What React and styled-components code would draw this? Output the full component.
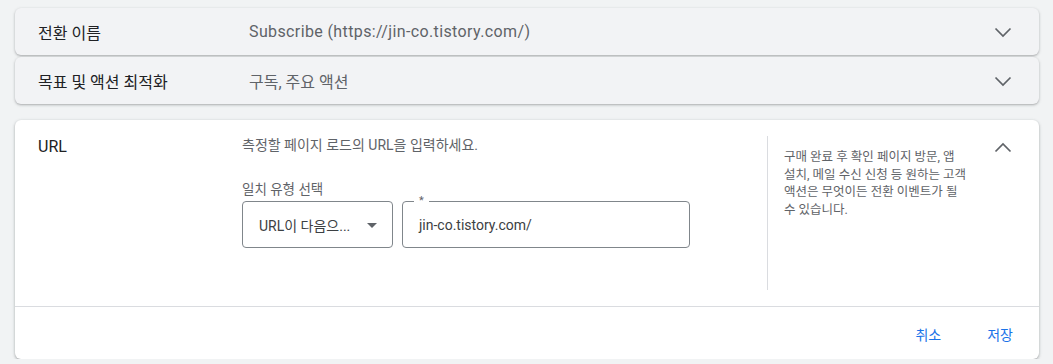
import React from "react";
import styled, { createGlobalStyle } from "styled-components";

const Global = createGlobalStyle`
  html, body { margin: 0; padding: 0; background: #f1f3f4; }
  body { font-family: Roboto, "Noto Sans CJK KR", sans-serif; color: #202124; }
  * { box-sizing: border-box; }
`;

const Page = styled.div`
  padding: 8px 14px 0 15px;
  display: flex;
  flex-direction: column;
`;

const CollapsedCard = styled.div`
  height: 47px;
  margin-bottom: 2px;
  background: #f2f3f5;
  border-radius: 6px;
  box-shadow: 0 1px 2px rgba(60, 64, 67, 0.3), 0 1px 3px 1px rgba(60, 64, 67, 0.08);
  display: flex;
  align-items: center;
  padding: 0 24px 0 23px;
`;

const RowLabel = styled.div`
  width: 211px;
  font-size: 16px;
  color: #202124;
`;

const RowValue = styled.div`
  flex: 1;
  font-size: 16px;
  letter-spacing: ${(p) => (p.$wide ? "0.38px" : "0")};
  color: #5f6368;
`;

const Icon = styled.svg`
  width: 24px;
  height: 24px;
  fill: none;
  stroke: #5f6368;
  stroke-width: 1.7;
  flex: none;
`;

const OpenCard = styled.div`
  margin-top: 14px;
  background: #fff;
  border-radius: 6px;
  box-shadow: 0 1px 2px rgba(60, 64, 67, 0.3), 0 1px 3px 1px rgba(60, 64, 67, 0.12);
  display: flex;
  flex-direction: column;
`;

const Body = styled.div`
  display: flex;
  padding: 16px 24px 16px 23px;
  border-bottom: 1px solid #dadce0;
`;

const SectionLabel = styled.div`
  width: 204px;
  padding-top: 1px;
  font-size: 16px;
  line-height: 20px;
  color: #202124;
`;

const Main = styled.div`
  width: 526px;
  display: flex;
  flex-direction: column;
  border-right: 1px solid #dadce0;
  min-height: 154px;
`;

const Desc = styled.div`
  font-size: 14px;
  line-height: 18px;
  color: #5f6368;
`;

const FieldLabel = styled.div`
  margin-top: 26px;
  font-size: 13.5px;
  line-height: 18px;
  color: #5f6368;
`;

const Fields = styled.div`
  display: flex;
  gap: 9px;
  margin-top: 3px;
`;

const Select = styled.div`
  width: 151px;
  height: 47px;
  border: 1px solid #80868b;
  border-radius: 4px;
  display: flex;
  align-items: center;
  justify-content: space-between;
  padding: 0 8px 0 16px;
  font-size: 14px;
  color: #3c4043;
`;

const Arrow = styled.svg`
  width: 24px;
  height: 24px;
  fill: #5f6368;
`;

const InputBox = styled.div`
  position: relative;
  width: 288px;
  height: 47px;
  border: 1px solid #80868b;
  border-radius: 4px;
  display: flex;
  align-items: center;
  padding: 0 16px;
  font-size: 14px;
  color: #3c4043;
`;

const Notch = styled.span`
  position: absolute;
  top: -8px;
  left: 11px;
  padding: 0 5px;
  background: #fff;
  font-size: 11px;
  line-height: 14px;
  color: #5f6368;
`;

const Help = styled.div`
  width: 200px;
  padding: 12px 0 0 16px;
  font-size: 12.5px;
  line-height: 17.7px;
  color: #5f6368;
  white-space: nowrap;
`;

const Side = styled.div`
  flex: 1;
  display: flex;
  justify-content: flex-end;
`;

const Footer = styled.div`
  height: 52px;
  display: flex;
  justify-content: flex-end;
  align-items: center;
  gap: 46px;
  padding: 2px 26px 0 0;
`;

const TextButton = styled.button`
  border: none;
  background: none;
  padding: 0;
  font-family: inherit;
  font-size: 14px;
  color: #1a73e8;
  cursor: pointer;
`;

const ExpandMore = () => (
  <Icon viewBox="0 0 24 24"><path d="M4.5 8.5L12 16l7.5-7.5" /></Icon>
);
const ExpandLess = () => (
  <Icon viewBox="0 0 24 24"><path d="M4.5 15.5L12 8l7.5 7.5" /></Icon>
);

export default function App() {
  return (
    <>
      <Global />
      <Page>
        <CollapsedCard>
          <RowLabel>전환 이름</RowLabel>
          <RowValue $wide>Subscribe (https://jin-co.tistory.com/)</RowValue>
          <ExpandMore />
        </CollapsedCard>
        <CollapsedCard>
          <RowLabel>목표 및 액션 최적화</RowLabel>
          <RowValue>구독, 주요 액션</RowValue>
          <ExpandMore />
        </CollapsedCard>
        <OpenCard>
          <Body>
            <SectionLabel>URL</SectionLabel>
            <Main>
              <Desc>측정할 페이지 로드의 URL을 입력하세요.</Desc>
              <FieldLabel>일치 유형 선택</FieldLabel>
              <Fields>
                <Select>
                  <span>URL이 다음으...</span>
                  <Arrow viewBox="0 0 24 24"><path d="M7 10l5 5 5-5z" /></Arrow>
                </Select>
                <InputBox>
                  <Notch>*</Notch>
                  jin-co.tistory.com/
                </InputBox>
              </Fields>
            </Main>
            <Help>
              구매 완료 후 확인 페이지 방문, 앱<br />
              설치, 메일 수신 신청 등 원하는 고객<br />
              액션은 무엇이든 전환 이벤트가 될<br />
              수 있습니다.
            </Help>
            <Side>
              <ExpandLess />
            </Side>
          </Body>
          <Footer>
            <TextButton>취소</TextButton>
            <TextButton>저장</TextButton>
          </Footer>
        </OpenCard>
      </Page>
    </>
  );
}
